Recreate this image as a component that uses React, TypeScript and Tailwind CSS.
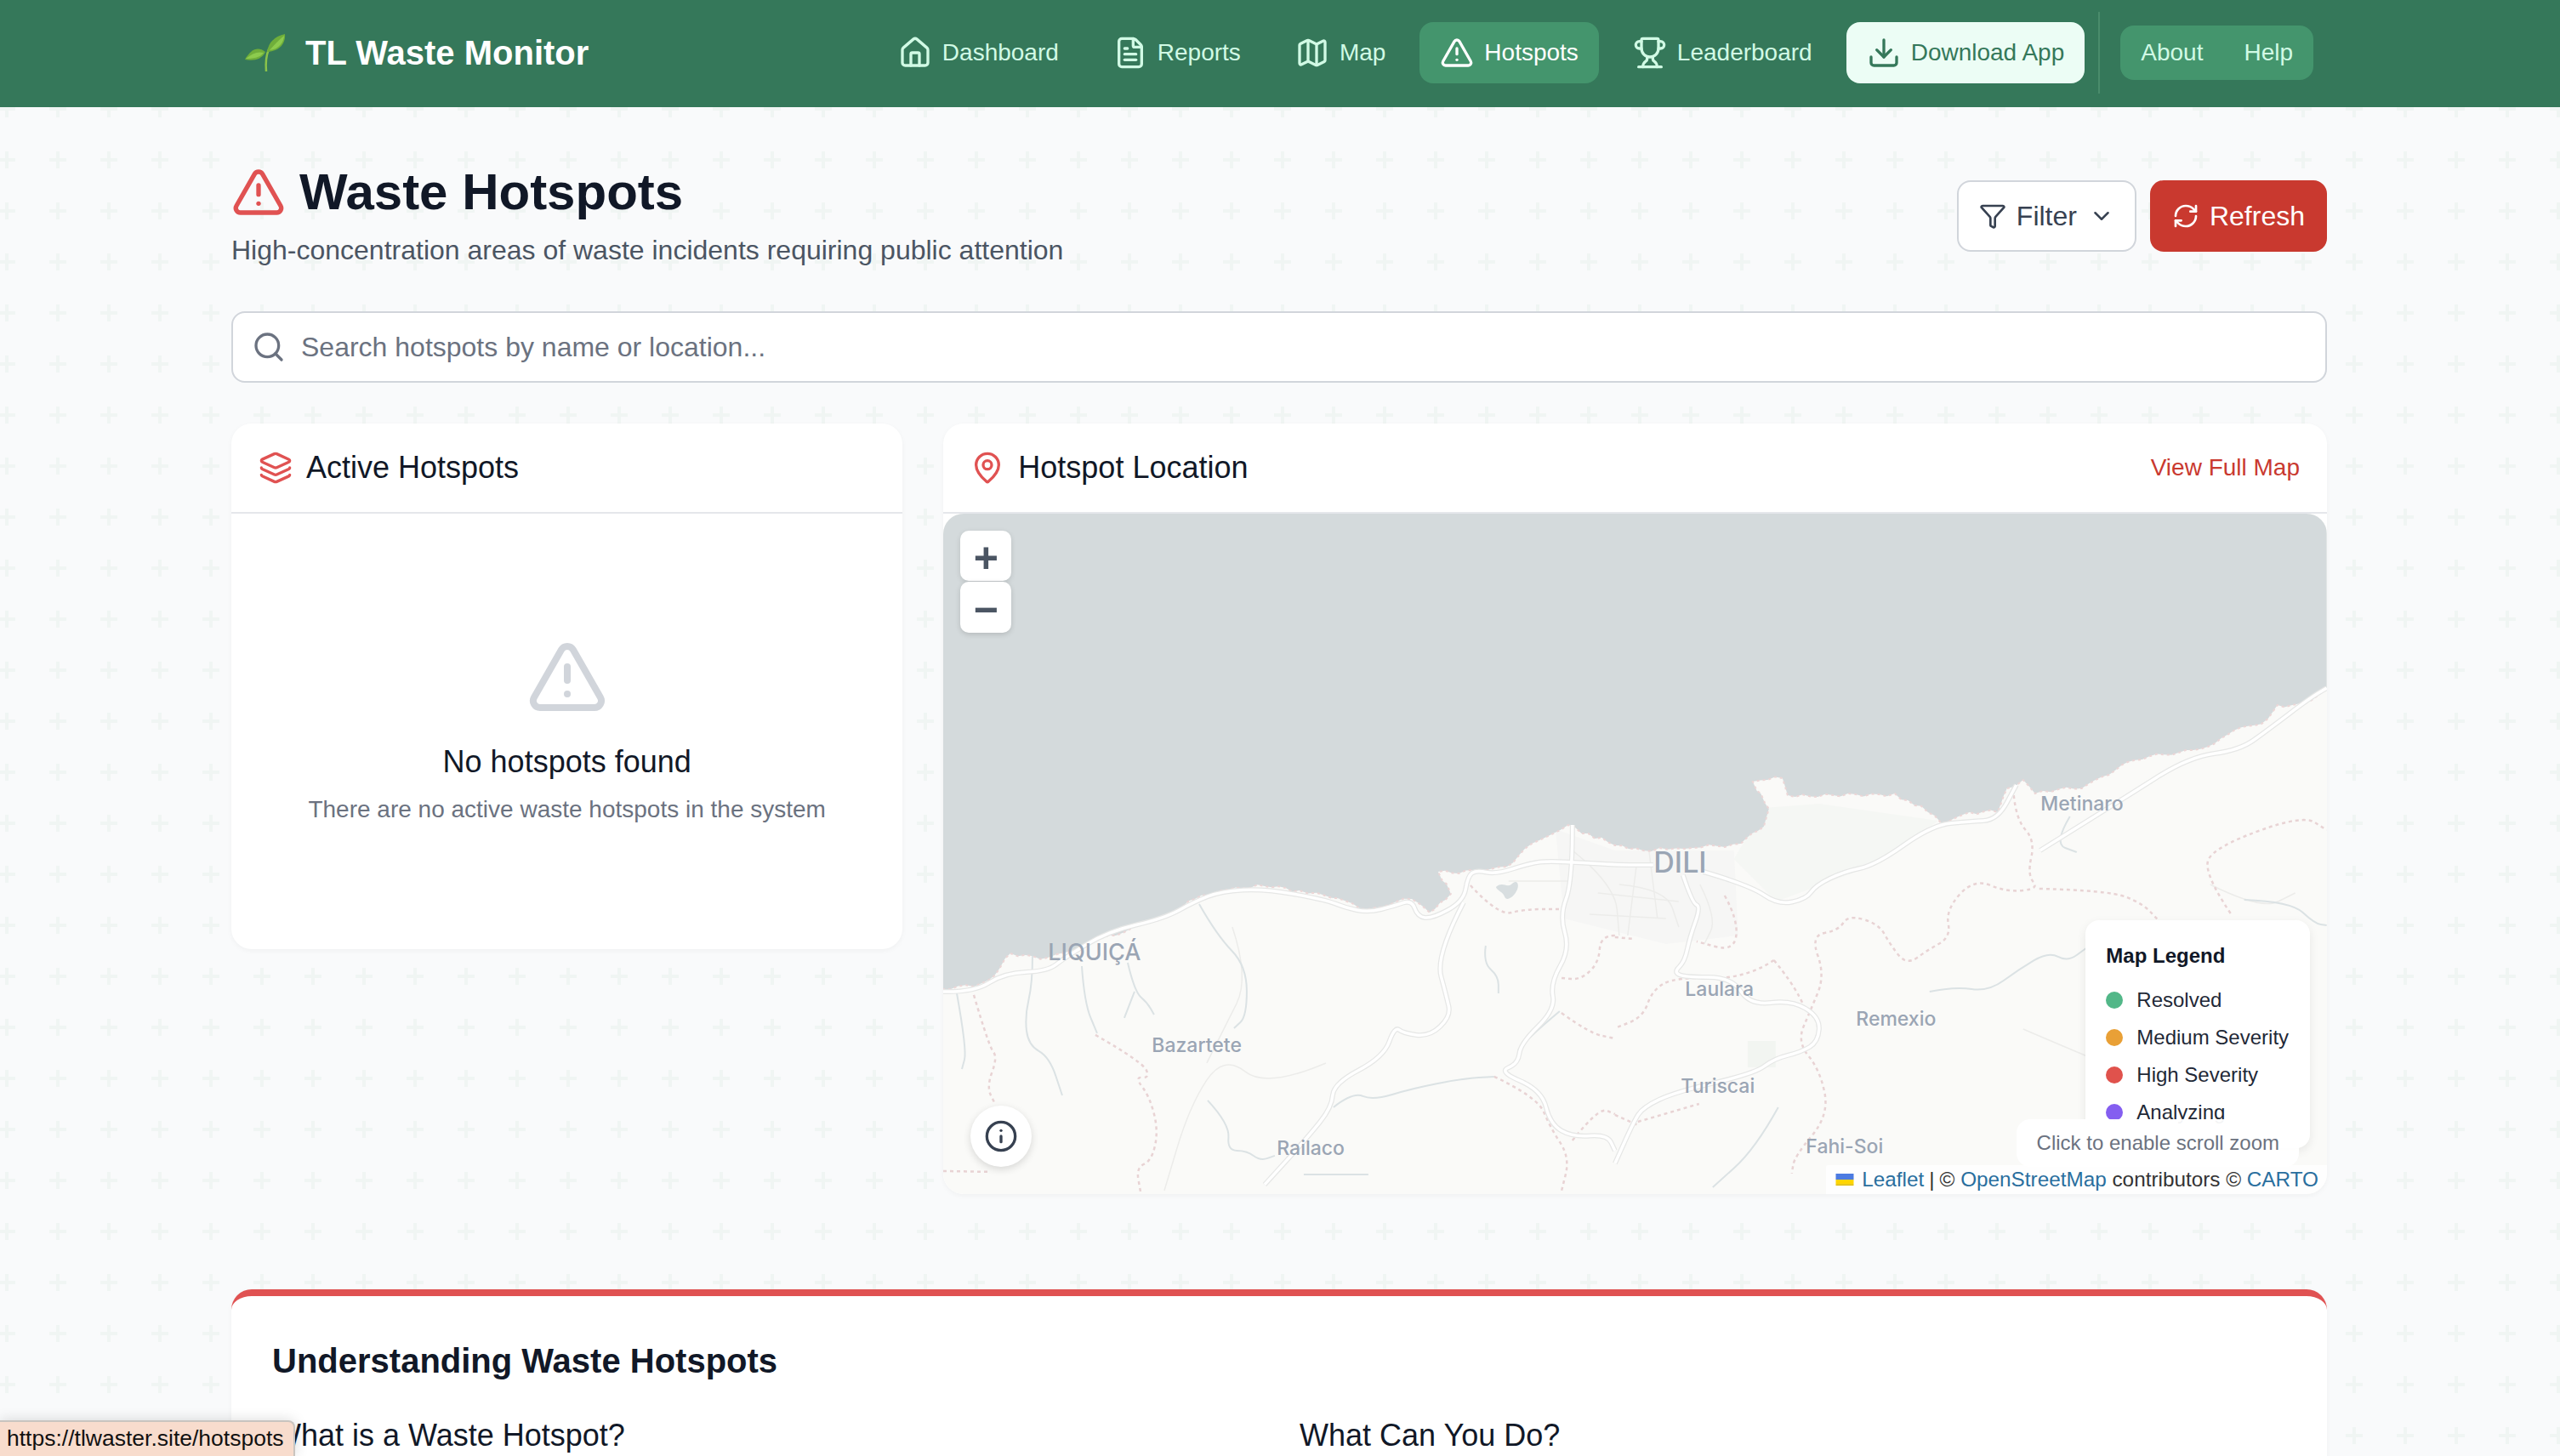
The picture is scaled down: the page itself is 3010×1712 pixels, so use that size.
import {
  ChevronDown,
  Download,
  FileText,
  Filter,
  House,
  Info,
  Layers,
  Map as MapIcon,
  MapPin,
  RefreshCw,
  Search,
  TriangleAlert,
  Trophy,
} from "lucide-react";

// flat x,y lists in page pixels, the map svg uses the same coordinates through its viewBox
const smooth = (pts: number[]) => {
  let d = `M${pts[0]} ${pts[1]}`;
  for (let i = 2; i < pts.length - 2; i += 2) {
    const mx = (pts[i] + pts[i + 2]) / 2;
    const my = (pts[i + 1] + pts[i + 3]) / 2;
    d += ` Q${pts[i]} ${pts[i + 1]} ${mx} ${my}`;
  }
  return d + ` L${pts[pts.length - 2]} ${pts[pts.length - 1]}`;
};

// shoreline: straight pieces with a small wobble so it does not look machine smooth
const rough = (pts: number[]) => {
  let d = `M${pts[0]} ${pts[1]}`;
  for (let i = 2; i < pts.length; i += 2) {
    const [x0, y0, x1, y1] = [pts[i - 2], pts[i - 1], pts[i], pts[i + 1]];
    const steps = Math.max(1, Math.round(Math.hypot(x1 - x0, y1 - y0) / 9));
    for (let s = 1; s <= steps; s++) {
      const t = s / steps;
      const x = x0 + (x1 - x0) * t;
      const y = y0 + (y1 - y0) * t;
      const wobble = s === steps ? 0 : Math.sin(x * 0.7) * 1.6 + Math.sin(x * 0.23 + y * 0.31) * 1.8;
      d += ` L${x.toFixed(1)} ${(y + wobble).toFixed(1)}`;
    }
  }
  return d;
};

const coast = [
  1109, 1163, 1146, 1160, 1164, 1152, 1189, 1121, 1233, 1126, 1253, 1120, 1304, 1100, 1340, 1087, 1370, 1079, 1406, 1057,
  1437, 1047, 1488, 1042, 1529, 1047, 1559, 1053, 1582, 1059, 1610, 1069, 1641, 1061, 1661, 1057, 1682, 1073, 1707, 1051,
  1692, 1025, 1733, 1023, 1773, 1019, 1794, 998, 1845, 970, 1900, 994, 1933, 1000, 1982, 998, 2048, 992, 2075, 972, 2081, 951,
  2062, 919, 2097, 915, 2103, 935, 2174, 933, 2229, 933, 2268, 955, 2284, 968, 2317, 955, 2350, 955, 2361, 927, 2380, 917,
  2394, 933, 2449, 927, 2481, 911, 2503, 896, 2580, 882, 2613, 868, 2668, 845, 2679, 829, 2712, 827, 2737, 809,
];

const roads = [
  [1109, 1166, 1146, 1167, 1182, 1144, 1233, 1142, 1253, 1126, 1304, 1095, 1370, 1080, 1406, 1060, 1437, 1048, 1488, 1045, 1560, 1058, 1582, 1067, 1610, 1073, 1641, 1065, 1661, 1058, 1668, 1078, 1685, 1080, 1722, 1060, 1727, 1030, 1737, 1023, 1760, 1028, 1800, 1015, 1825, 1012, 1900, 1017, 1945, 1017],
  [2004, 1025, 2059, 1041, 2092, 1064, 2125, 1057, 2136, 1041, 2169, 1025, 2207, 1017, 2273, 970, 2317, 966, 2350, 964, 2372, 923],
  [2400, 1000, 2498, 939, 2575, 890, 2635, 882, 2668, 858, 2717, 821, 2737, 809],
  [1980, 1029, 1991, 1062, 2001, 1066, 1988, 1102, 1982, 1131, 1969, 1143, 1982, 1149, 2037, 1149, 2059, 1182, 2108, 1176, 2141, 1196, 2139, 1225, 2119, 1237, 2087, 1245, 2065, 1262, 1971, 1284, 1933, 1302, 1922, 1319, 1900, 1368],
  [1722, 1061, 1689, 1124, 1702, 1172, 1707, 1195, 1682, 1219, 1651, 1215, 1641, 1207, 1628, 1243, 1569, 1274, 1567, 1302, 1539, 1337, 1488, 1393],
  [1850, 970, 1850, 1037, 1835, 1077, 1847, 1116, 1824, 1156, 1830, 1187, 1789, 1227, 1786, 1251, 1763, 1260, 1814, 1282, 1824, 1322, 1850, 1337, 1891, 1334, 1900, 1353],
];

const rivers = [
  [1215, 1124, 1215, 1156, 1206, 1195, 1210, 1229, 1235, 1243, 1250, 1288],
  [1273, 1136, 1276, 1179, 1291, 1215],
  [1327, 1132, 1335, 1166, 1350, 1179, 1358, 1193],
  [1335, 1166, 1323, 1197],
  [1411, 1063, 1432, 1100, 1467, 1136, 1467, 1195, 1452, 1209],
  [1126, 1168, 1138, 1235, 1132, 1257],
  [1748, 1112, 1745, 1132, 1763, 1148, 1763, 1168],
  [1421, 1294, 1447, 1322, 1444, 1353, 1467, 1353, 1483, 1365, 1500, 1359],
  [1534, 1381, 1610, 1381],
  [1569, 1302, 1592, 1284, 1615, 1294, 1661, 1280, 1722, 1268, 1758, 1266],
  [1835, 1189, 1804, 1215, 1786, 1235],
  [2270, 1166, 2300, 1160, 2339, 1166, 2375, 1140, 2410, 1119, 2432, 1131, 2454, 1115],
  [2092, 1302, 2065, 1351, 2015, 1396],
  [2640, 1058, 2695, 1060, 2723, 1086, 2737, 1088],
  [2435, 960, 2416, 992, 2443, 1002],
];

const borders = [
  [1146, 1170, 1164, 1231, 1174, 1243, 1161, 1278, 1171, 1298],
  [1289, 1217, 1345, 1249, 1353, 1268, 1335, 1266, 1353, 1290, 1363, 1330, 1355, 1365, 1337, 1373, 1342, 1401],
  [1110, 1377, 1166, 1378],
  [1758, 1266, 1809, 1290, 1824, 1326, 1847, 1361, 1837, 1401],
  [1850, 1341, 1881, 1302, 1900, 1310],
  [1730, 1041, 1763, 1077, 1794, 1069, 1835, 1069],
  [1900, 1100, 1883, 1100, 1881, 1132, 1860, 1152, 1837, 1150],
  [1837, 1191, 1870, 1215, 1900, 1221],
  [2369, 935, 2372, 964, 2394, 988, 2385, 1029, 2399, 1045, 2361, 1049, 2322, 1033, 2289, 1070, 2295, 1102, 2268, 1117, 2243, 1135, 2224, 1111, 2210, 1086, 2174, 1076, 2163, 1094, 2130, 1100, 2147, 1147, 2130, 1188, 2114, 1225, 2141, 1258, 2152, 1311, 2111, 1360, 2108, 1380],
  [2399, 1045, 2481, 1047, 2520, 1062, 2539, 1082],
  [2624, 1074, 2591, 1025, 2605, 996, 2709, 958, 2737, 976],
  [2029, 1053, 2045, 1082, 2040, 1119, 1996, 1107],
  [2087, 1129, 2108, 1155, 2125, 1188],
  [2087, 1129, 2054, 1151, 1971, 1149, 1944, 1164, 1933, 1196, 1900, 1209],
  [1927, 1319, 1999, 1298],
  [1900, 1311, 1927, 1323],
  [1900, 1102, 1922, 1104],
];

const streets = [
  [1850, 1000, 1900, 1040, 1905, 1100],
  [1775, 1036, 1850, 1036],
  [1905, 1040, 1960, 1045, 1975, 1090],
  [1940, 1000, 1950, 1080],
  [1880, 1050, 1975, 1060],
  [1870, 1075, 1960, 1080],
  [1925, 1020, 1915, 1100],
  [2000, 1040, 2020, 1080, 2005, 1110],
  [1450, 1090, 1470, 1150, 1440, 1210, 1420, 1250],
  [1560, 1250, 1490, 1280, 1440, 1240, 1400, 1300, 1370, 1400],
  [2380, 1210, 2450, 1240, 2500, 1260],
  [2600, 1040, 2660, 1070, 2700, 1050],
];

const placeLabels = [
  { name: "LIQUIÇÁ", className: "left-[123px] top-[502px] text-[27px]" },
  { name: "DILI", className: "left-[835px] top-[393px] text-[34px]" },
  { name: "Metinaro", className: "left-[1290px] top-[330px] text-[23px]" },
  { name: "Bazartete", className: "left-[245px] top-[614px] text-[23px]" },
  { name: "Laulara", className: "left-[872px] top-[548px] text-[23px]" },
  { name: "Remexio", className: "left-[1073px] top-[583px] text-[23px]" },
  { name: "Turiscai", className: "left-[867px] top-[662px] text-[23px]" },
  { name: "Railaco", className: "left-[392px] top-[735px] text-[23px]" },
  { name: "Fahi-Soi", className: "left-[1014px] top-[733px] text-[23px]" },
];

const legendItems = [
  { label: "Resolved", dot: "bg-[#52b788]" },
  { label: "Medium Severity", dot: "bg-[#e9a036]" },
  { label: "High Severity", dot: "bg-[#e0524c]" },
  { label: "Analyzing", dot: "bg-[#845ef0]" },
];

const navItems = [
  { label: "Dashboard", icon: House },
  { label: "Reports", icon: FileText },
  { label: "Map", icon: MapIcon },
  { label: "Hotspots", icon: TriangleAlert, active: true },
  { label: "Leaderboard", icon: Trophy },
];

const Seedling = () => (
  <svg width="50" height="46" viewBox="0 0 50 46" className="shrink-0">
    <path d="M26 45C25 34 26 26 29 19" fill="none" stroke="#8bc34a" strokeWidth="2.5" />
    <path d="M27 22C29 10 36 4 48 1C49 11 43 21 27 22Z" fill="#6fae3a" />
    <path d="M30 20C35 14 40 9 47 3C47 10 41 19 30 20Z" fill="#8ccb4e" />
    <path d="M25 22C16 15 8 19 1 31C11 33 21 31 25 22Z" fill="#6fae3a" />
    <path d="M23 23C16 21 9 24 2 30C10 30 19 29 23 23Z" fill="#8ccb4e" />
  </svg>
);

const TopNav = () => (
  <header className="h-[126px] bg-[#35785a]">
    <div className="ml-[272px] flex h-full w-[2464px] items-center justify-between pb-[2px] pl-[15px] pr-[16px]">
      <div className="flex items-center gap-[22px]">
        <Seedling />
        <span className="text-[40px] font-bold leading-[56px] text-white">TL Waste Monitor</span>
      </div>
      <nav className="flex items-center">
        <div className="flex items-center gap-[16px]">
          {navItems.map(({ label, icon: Icon, active }) => (
            <a
              key={label}
              className={`flex h-[72px] items-center gap-[12px] rounded-[16px] px-[24px] text-[28px] ${
                active ? "bg-[#44956d] text-white" : "text-[#d1fae5]"
              }`}
            >
              <Icon size={40} />
              {label}
            </a>
          ))}
          <a className="flex h-[72px] items-center gap-[12px] rounded-[16px] bg-[#ecfdf5] px-[24px] text-[28px] text-[#35785a]">
            <Download size={40} />
            Download App
          </a>
        </div>
        <div className="ml-[16px] mr-[24px] h-[96px] w-[2px] bg-[#4a8c6c]" />
        <div className="flex rounded-[16px] bg-[#44956d] text-[28px] text-[#d1fae5]">
          <a className="px-[24px] py-[12px] leading-[40px]">About</a>
          <a className="px-[24px] py-[12px] leading-[40px]">Help</a>
        </div>
      </nav>
    </div>
  </header>
);

const CardHeader = ({ icon, title, action }: { icon: React.ReactNode; title: string; action?: string }) => (
  <div className="flex items-center justify-between border-b-2 border-[#e5e7eb] px-[32px] py-[24px]">
    <div className="flex items-center gap-[16px]">
      {icon}
      <h2 className="text-[36px] leading-[56px] text-[#111827]">{title}</h2>
    </div>
    {action && <a className="text-[28px] leading-[40px] text-[#c9392f]">{action}</a>}
  </div>
);

const HotspotMap = () => (
  <div className="relative h-[800px] overflow-hidden rounded-[24px] bg-[#fafaf8]">
    <svg viewBox="1110 604 1627 800" className="absolute inset-0 h-full w-full">
      <path d="M2075 950L2140 945L2280 965L2210 1015L2130 1045L2090 1060L2040 1010Z" fill="#f5f7f4" />
      <path d="M1830 975L1900 1000L2040 1000L2045 1100L1960 1110L1880 1090L1840 1080Z" fill="#f6f6f5" />
      <rect x="2056" y="1224" width="33" height="31" fill="#f2f5f1" />
      <path d={`${rough(coast)} L2737 604 L1110 604 Z`} fill="#d4dadc" />
      <path d="M1760 1043C1768 1036 1772 1044 1778 1040C1786 1032 1788 1042 1784 1048C1780 1056 1772 1060 1770 1054C1768 1048 1762 1048 1760 1043Z" fill="#d8dee0" />
      {streets.map((p, i) => (
        <path key={i} d={smooth(p)} fill="none" stroke="#ececea" strokeWidth="1.5" />
      ))}
      {rivers.map((p, i) => (
        <path key={i} d={smooth(p)} fill="none" stroke="#dbe2e4" strokeWidth="2" />
      ))}
      {borders.map((p, i) => (
        <path key={i} d={smooth(p)} fill="none" stroke="#e8d3d4" strokeWidth="2.5" strokeDasharray="4 4" />
      ))}
      <path d={rough(coast)} fill="none" stroke="#ecd6d6" strokeWidth="2" strokeDasharray="3 4" />
      {roads.map((p, i) => (
        <path key={i} d={smooth(p)} fill="none" stroke="#e6e7e6" strokeWidth="6" strokeLinejoin="round" />
      ))}
      {roads.map((p, i) => (
        <path key={i} d={smooth(p)} fill="none" stroke="#ffffff" strokeWidth="3.5" strokeLinejoin="round" />
      ))}
    </svg>

    {placeLabels.map((place) => (
      <span
        key={place.name}
        className={`absolute font-['Inter',sans-serif] font-medium leading-none text-[#9aa5b4] ${place.className}`}
      >
        {place.name}
      </span>
    ))}

    <div className="absolute left-[20px] top-[20px] flex w-[60px] flex-col gap-[1px]">
      <button className="h-[59px] rounded-[10px] bg-white text-[50px] font-bold leading-[64px] text-[#4b5563] shadow-[0_2px_6px_rgba(0,0,0,0.12)]">
        +
      </button>
      <button className="h-[60px] rounded-[10px] bg-white text-[50px] font-bold leading-[66px] text-[#4b5563] shadow-[0_2px_6px_rgba(0,0,0,0.15)]">
        −
      </button>
    </div>

    <button className="absolute left-[32px] top-[696px] flex h-[72px] w-[72px] items-center justify-center rounded-full bg-white text-[#374151] shadow-[0_3px_10px_rgba(0,0,0,0.14)]">
      <Info size={40} />
    </button>

    <div className="absolute left-[1343px] top-[478px] h-[268px] w-[264px] rounded-[16px] bg-white px-[24px] pt-[24px] shadow-[0_4px_12px_rgba(0,0,0,0.08)]">
      <h4 className="mb-[16px] text-[24px] font-semibold leading-[36px] text-[#111827]">Map Legend</h4>
      <ul className="flex flex-col gap-[8px]">
        {legendItems.map((item) => (
          <li key={item.label} className="flex h-[36px] items-center gap-[16px] text-[24px] text-[#1f2937]">
            <span className={`h-[20px] w-[20px] rounded-full ${item.dot}`} />
            {item.label}
          </li>
        ))}
      </ul>
    </div>

    <div className="absolute left-[1262px] top-[712px] flex h-[56px] w-[332px] items-center justify-center rounded-[16px] bg-white/95 text-[24px] text-[#6b7280]">
      Click to enable scroll zoom
    </div>

    <div className="absolute bottom-0 right-0 flex h-[34px] items-center rounded-tl-[2px] bg-white/80 pl-[10px] pr-[10px] text-[24.3px] leading-[34px] text-[#333333]">
      <svg width="24" height="14" viewBox="0 0 12 8" className="mr-[8px]">
        <path fill="#4C7BE1" d="M0 0h12v4H0z" />
        <path fill="#FFD500" d="M0 4h12v3H0z" />
        <path fill="#E0BC00" d="M0 7h12v1H0z" />
      </svg>
      <a className="text-[#2a6f9e]">Leaflet</a>
      <span className="mx-[6px]">|</span>©&nbsp;
      <a className="text-[#2a6f9e]">OpenStreetMap</a>&nbsp;contributors ©&nbsp;
      <a className="text-[#2a6f9e]">CARTO</a>
    </div>
  </div>
);

export default function App() {
  return (
    <div className="relative h-[1712px] overflow-hidden bg-[#f9fafb] bg-[url('data:image/svg+xml,%3Csvg%20xmlns=%22http://www.w3.org/2000/svg%22%20width=%2260%22%20height=%2260%22%3E%3Cpath%20d=%22M28%2020h4v8h8v4h-8v8h-4v-8h-8v-4h8z%22%20fill=%22%23f0f5f3%22/%3E%3C/svg%3E')] bg-[position:-22px_-22px] font-['Liberation_Sans',Arial,sans-serif]">
      <TopNav />

      <main className="ml-[272px] w-[2464px] pt-[64px]">
        <div className="mb-[48px] flex items-center justify-between">
          <div>
            <h1 className="mb-[8px] flex items-center gap-[16px] text-[60px] font-bold leading-[72px] text-[#111827]">
              <TriangleAlert size={64} className="text-[#e05252]" />
              Waste Hotspots
            </h1>
            <p className="text-[32px] leading-[48px] text-[#4b5563]">
              High-concentration areas of waste incidents requiring public attention
            </p>
          </div>
          <div className="flex gap-[16px]">
            <button className="flex h-[84px] items-center gap-[12px] rounded-[16px] border-2 border-[#d1d5db] bg-white pl-[24px] pr-[24px] text-[32px] text-[#374151]">
              <Filter size={32} />
              Filter
              <ChevronDown size={30} className="ml-[2px]" />
            </button>
            <button className="flex h-[84px] items-center gap-[12px] rounded-[16px] bg-[#c9392f] px-[26px] text-[32px] text-white">
              <RefreshCw size={32} />
              Refresh
            </button>
          </div>
        </div>

        <div className="mb-[48px] flex h-[84px] items-center gap-[16px] rounded-[16px] border-2 border-[#d1d5db] bg-white pl-[22px] pr-[24px]">
          <Search size={40} className="shrink-0 text-[#6b7280]" />
          <input
            className="ml-[2px] w-full bg-transparent text-[32px] text-[#111827] outline-none placeholder:text-[#6b7280]"
            placeholder="Search hotspots by name or location..."
          />
        </div>

        <div className="mb-[112px] grid grid-cols-3 items-start gap-[48px]">
          <section className="overflow-hidden rounded-[24px] bg-white shadow-[0_2px_6px_rgba(0,0,0,0.04)]">
            <CardHeader icon={<Layers size={40} className="text-[#e05252]" />} title="Active Hotspots" />
            <div className="flex flex-col items-center py-[144px]">
              <TriangleAlert size={96} className="mb-[24px] text-[#d1d5db]" />
              <h3 className="mb-[8px] text-[36px] leading-[56px] text-[#111827]">No hotspots found</h3>
              <p className="text-[28px] leading-[40px] text-[#6b7280]">There are no active waste hotspots in the system</p>
            </div>
          </section>

          <section className="col-span-2 overflow-hidden rounded-[24px] bg-white shadow-[0_2px_6px_rgba(0,0,0,0.04)]">
            <CardHeader icon={<MapPin size={40} className="text-[#e05252]" />} title="Hotspot Location" action="View Full Map" />
            <HotspotMap />
          </section>
        </div>

        <section className="rounded-[24px] border-t-8 border-[#e05252] bg-white p-[48px] shadow-[0_2px_6px_rgba(0,0,0,0.04)]">
          <h2 className="mb-[32px] text-[40px] font-bold leading-[56px] text-[#111827]">Understanding Waste Hotspots</h2>
          <div className="grid grid-cols-2 gap-[48px]">
            <h3 className="text-[36px] leading-[56px] text-[#111827]">What is a Waste Hotspot?</h3>
            <h3 className="text-[36px] leading-[56px] text-[#111827]">What Can You Do?</h3>
          </div>
        </section>
      </main>

      <div className="absolute bottom-0 left-0 flex h-[42px] w-[347px] items-center rounded-tr-[8px] border-r-2 border-t-2 border-[#c9c4bf] bg-[#f8dccd] pl-[8px] text-[26.5px] text-[#111111] shadow-[0_0_16px_rgba(0,0,0,0.15)]">
        https://tlwaster.site/hotspots
      </div>
    </div>
  );
}
